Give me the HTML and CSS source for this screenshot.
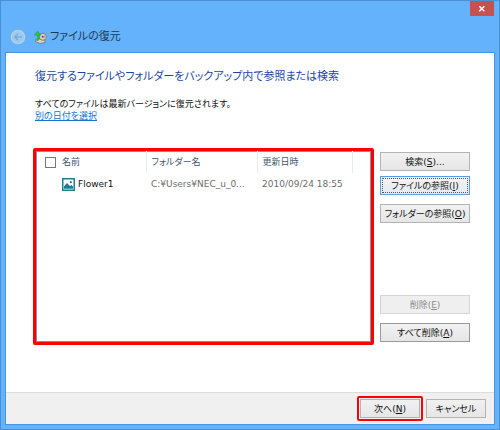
FILE: index.html
```html
<!DOCTYPE html>
<html lang="ja">

<head>
    <meta charset="UTF-8">
    <meta name="viewport" content="width=device-width, initial-scale=1.0">
    <title>ファイルの復元</title>
    <link rel="stylesheet" href="styles.css">
</head>

<body>
    <div class="window">
        <header class="titlebar">
            <button class="close" aria-label="閉じる">
                <svg width="8" height="8" viewBox="0 0 8 8"><path d="M1.3 1.3l5 5M6.3 1.3l-5 5" stroke="#fff" stroke-width="1.5"/></svg>
            </button>
            <button class="back" aria-label="戻る">
                <svg width="16" height="16" viewBox="0 0 16 16" fill="none">
                    <circle cx="8" cy="8" r="6.7" fill="#98cbf8" stroke="#b9cddd" stroke-width="1.3"/>
                    <path d="M12 8H5M8 4.8L4.8 8L8 11.2" stroke="#86a9c8" stroke-width="1.5"/>
                </svg>
            </button>
            <svg class="app-icon" width="13" height="13" viewBox="0 0 13 13">
                <path d="M1.5 8.5l5-1.5 4.5 2.5v2l-5 1-4.5-2z" fill="#d9d4c9" stroke="#77716b" stroke-width=".8"/>
                <circle cx="8.7" cy="5.8" r="3.5" fill="#d6cfd3" stroke="#71676a" stroke-width=".8"/>
                <path d="M8.7 5.8l3-1.8a3.5 3.5 0 0 1 0 3.6z" fill="#d9a184"/>
                <circle cx="8.7" cy="5.8" r="1" fill="#594f52"/>
                <path d="M2.4 9.5c1.4-1.5 1.5-3.5 1.2-5.3H.4L3.6.2l3.2 4H5.6c.3 2 0 4.2-1.4 5.3z" fill="#2fc23f" stroke="#279638" stroke-width=".5"/>
            </svg>
            <span class="title">ファイルの復元</span>
        </header>

        <div class="client">
            <main class="content">
                <h1>復元するファイルやフォルダーをバックアップ内で参照または検索</h1>
                <p>すべてのファイルは最新バージョンに復元されます。</p>
                <a href="#">別の日付を選択</a>

                <div class="browse">
                    <div class="file-list">
                        <table>
                            <thead>
                                <tr>
                                    <th class="col-check"><input type="checkbox" aria-label="すべて選択"></th>
                                    <th class="col-name">名前</th>
                                    <th class="col-folder">フォルダー名</th>
                                    <th class="col-date">更新日時</th>
                                    <th></th>
                                </tr>
                            </thead>
                            <tbody>
                                <tr>
                                    <td></td>
                                    <td class="name">
                                        <svg width="13" height="13" viewBox="0 0 13 13">
                                            <rect x=".75" y=".75" width="11.5" height="11.5" fill="#fff" stroke="#168097" stroke-width="1.5"/>
                                            <path d="M2 10.8V8.2L5 5l3 3 1.3-1L11 8.6v2.2z" fill="#168097"/>
                                            <circle cx="8.8" cy="4.2" r="1.1" fill="#168097"/>
                                        </svg>
                                        <span>Flower1</span>
                                    </td>
                                    <td>C:¥Users¥NEC_u_0...</td>
                                    <td>2010/09/24 18:55</td>
                                    <td></td>
                                </tr>
                            </tbody>
                        </table>
                    </div>

                    <div class="actions">
                        <button>検索(<u>S</u>)...</button>
                        <button class="focused">ファイルの参照(<u>I</u>)</button>
                        <button>フォルダーの参照(<u>O</u>)</button>
                        <div class="remove">
                            <button disabled>削除(<u>E</u>)</button>
                            <button class="strong">すべて削除(<u>A</u>)</button>
                        </div>
                    </div>
                </div>
            </main>

            <footer class="footer">
                <div class="marked"><button>次へ(<u>N</u>)</button></div>
                <button>キャンセル</button>
            </footer>
        </div>
    </div>
</body>

</html>
```

FILE: styles.css
```css
* {
    box-sizing: border-box;
}

body {
    margin: 0;
    font-family: "DejaVu Sans", "Noto Sans CJK JP", sans-serif;
    font-size: 9px;
    line-height: 12px;
    font-feature-settings: "palt";
    color: #111;
}

.window {
    display: flex;
    flex-direction: column;
    min-height: 100vh;
    padding: 0 5px 5px;
    border: 1px solid #4b90d5;
    background: #64b2fc;
}

/* title bar */
.titlebar {
    position: relative;
    display: flex;
    align-items: center;
    height: 51px;
    padding: 21px 0 0 4px;
}

.close {
    position: absolute;
    top: 0;
    right: 0;
    display: flex;
    align-items: center;
    justify-content: center;
    width: 24px;
    height: 15px;
    padding: 0;
    border: 0;
    background: #c75050;
}

.back {
    display: flex;
    padding: 0;
    border: 0;
    background: none;
}

.app-icon {
    margin: 0 3px 0 8px;
}

.title {
    font-size: 11px;
    line-height: 16px;
    color: #22384f;
}

.client {
    flex: 1;
    display: flex;
    flex-direction: column;
    border: 1px solid #4695e3;
    margin: 0 -1px -1px;
    background: #fff;
}

.content {
    flex: 1;
    padding: 16px 24px 0 29px;
}

h1 {
    margin: 0 0 13px;
    font-size: 11px;
    font-weight: normal;
    line-height: 16px;
    color: #1a47a5;
}

p {
    margin: 0;
}

a {
    display: block;
    width: max-content;
    color: #1673cf;
}

/* file list */
.browse {
    display: flex;
    gap: 6px;
    margin: 26px 0 0 -2px;
}

.file-list {
    flex: 1;
    height: 197px;
    border: 3px solid #f00;
    border-radius: 2px;
    box-shadow: inset 0 0 0 1px #8b9097;
}

table {
    width: 100%;
    table-layout: fixed;
    border-collapse: collapse;
}

th,
td {
    height: 22px;
    padding: 0 5px;
    text-align: left;
    font-weight: normal;
    white-space: nowrap;
}

th {
    color: #43566f;
}

th + th + th {
    border-left: 1px solid #e3edf7;
}

td {
    color: #6d6d6d;
}

.col-check {
    width: 21px;
    padding: 0 0 0 9px;
}

.col-name {
    width: 89px;
}

.col-folder {
    width: 111px;
}

.col-date {
    width: 95px;
}

.name {
    display: flex;
    align-items: center;
    gap: 3px;
    color: #111;
}

input[type="checkbox"] {
    appearance: none;
    display: block;
    width: 11px;
    height: 11px;
    margin: 0;
    border: 1px solid #777;
    background: #fff;
}

/* buttons */
.actions {
    display: flex;
    flex-direction: column;
    gap: 5px;
    width: 90px;
    padding: 4px 0 3px;
}

.actions button,
.footer button {
    height: 19px;
    padding: 0;
    border: 1px solid #b3b3b3;
    background: linear-gradient(#f1f1f1, #e6e6e6);
    font: inherit;
    font-feature-settings: inherit;
    white-space: nowrap;
    color: #111;
}

.actions .focused {
    margin-bottom: 4px;
    border-color: #569de5;
    outline: 1px dotted #555;
    outline-offset: -3px;
    background: linear-gradient(#f1f4f7, #e4eaf0);
}

.actions .strong {
    border-color: #999;
}

.actions button:disabled {
    border-color: #d5d5d5;
    background: #efefef;
    color: #8b8b8b;
}

.remove {
    display: flex;
    flex-direction: column;
    gap: 9px;
    margin-top: auto;
}

/* footer */
.footer {
    display: flex;
    align-items: center;
    justify-content: flex-end;
    gap: 3px;
    height: 32px;
    padding-right: 8px;
    border-top: 1px solid #dcdcdc;
    background: #f0f0f0;
}

.footer button {
    width: 60px;
}

.marked {
    display: flex;
    padding: 1px;
    border: 2px solid #f00;
    border-radius: 2px;
}
```
